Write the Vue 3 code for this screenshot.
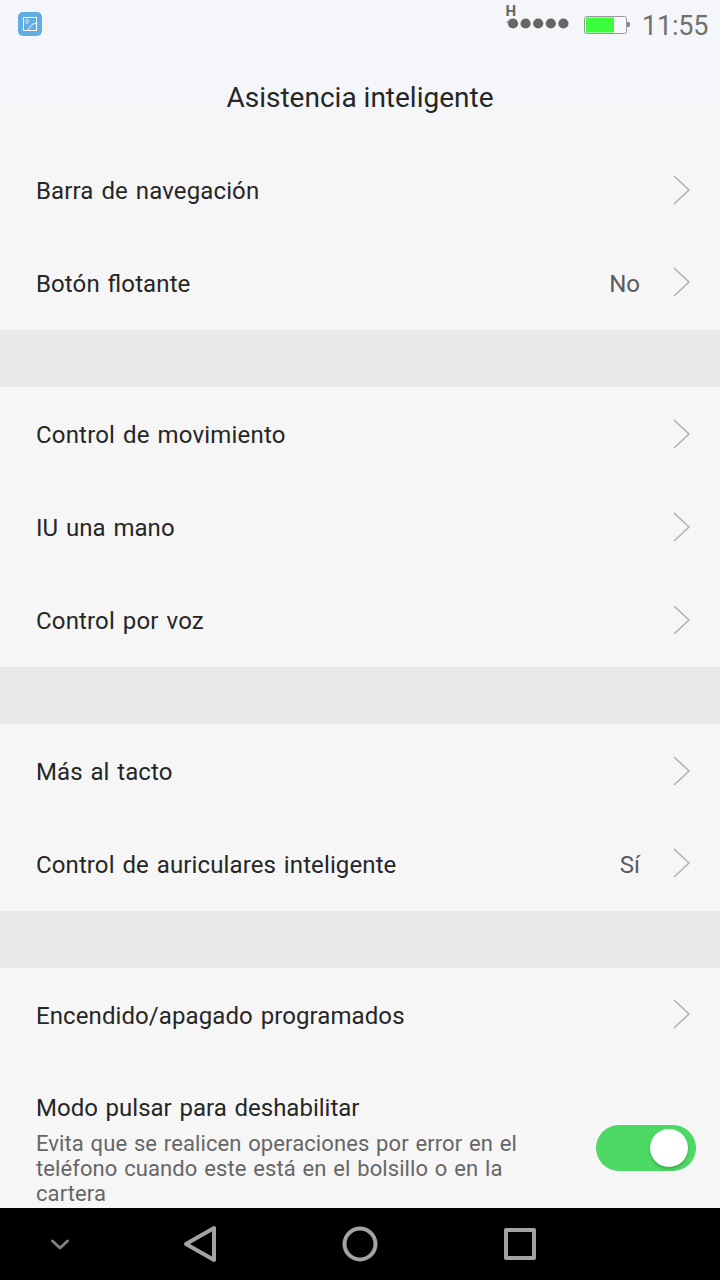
<script setup>
const groups = [
  [{ t: 'Barra de navegación', s: 0.13 }, { t: 'Botón flotante', v: 'No', s: 0.11, up: true }],
  [{ t: 'Control de movimiento', s: 0.18 }, { t: 'IU una mano', s: 0.04 }, { t: 'Control por voz', s: 0.16 }],
  [{ t: 'Más al tacto', s: 0.07 }, { t: 'Control de auriculares inteligente', v: 'Sí', s: 0.11, up: true }],
  [{ t: 'Encendido/apagado programados', s: 0.09, up: true }],
]
</script>

<template>
  <div class="screen">
    <header class="top">
      <div class="status">
        <svg class="app" width="24" height="24" viewBox="0 0 24 24">
          <rect width="24" height="24" rx="5" fill="#62aee2" />
          <g fill="none" stroke="#fff" stroke-width="1">
            <rect x="5.5" y="5.5" width="13" height="13" />
            <ellipse cx="9" cy="9.4" rx="1.4" ry="1.9" stroke-opacity=".8" />
            <path d="M18 11.5c-4 .2-5 1.500-5.700 3.500-.500 1-1.800 1-2.300 3" />
          </g>
        </svg>
        <svg class="indicators" width="130" height="48" viewBox="0 0 130 48">
          <g fill="#666">
            <circle v-for="i in 5" :key="i" :cx="0.4 + i * 12.6" cy="23.5" r="5.1" />
            <path d="M6 22l4-3v4H6z" opacity=".4" />
          </g>
          <text x="5.500" y="16" class="net">H</text>
          <rect x="84.500" y="16.500" width="42" height="17" rx="2" fill="#f8f9fb" stroke="#999" />
          <rect x="86" y="17.500" width="28" height="15" fill="#3cff3c" />
          <path d="M127 22h2l1 1v3l-1 1h-2z" fill="#888" />
        </svg>
        <span class="time">11:55</span>
      </div>
      <h1>Asistencia inteligente</h1>
    </header>
    <main>
      <section v-for="(g, i) in groups" :key="i">
        <div v-for="r in g" :key="r.t" class="row">
          <span class="label" :style="{ letterSpacing: r.s + 'px' }">{{ r.t }}</span>
          <span class="value">{{ r.v }}</span>
          <svg class="chev" :class="{ up: r.up }" width="18" height="30" viewBox="0 0 18 30"><path d="M1 1l15 14L1 29" /></svg>
        </div>
        <div v-if="i === 3" class="mode">
          <div>
            <div class="label">Modo pulsar para deshabilitar</div>
            <p>Evita que se realicen operaciones por error en el<br />teléfono cuando este está en el bolsillo o en la<br />cartera</p>
          </div>
          <div class="switch"><i></i></div>
        </div>
      </section>
    </main>
    <nav>
      <svg width="720" height="72" viewBox="0 0 720 72" fill="none" stroke="#a3a3a3" stroke-width="4" stroke-linejoin="round">
        <path d="M52.500 33l7.500 7 7.500-7" stroke="#808080" stroke-width="3" stroke-linecap="round" />
        <path d="M214 20v32l-28-16z" />
        <circle cx="360" cy="36" r="15.500" />
        <rect x="506" y="22" width="28" height="28" />
      </svg>
    </nav>
  </div>
</template>

<style>
body { margin: 0; }
</style>
<style scoped>
.screen { width: 720px; height: 1280px; overflow: hidden; display: flex; flex-direction: column; background: #e9e9e9; font-family: Roboto, "Noto Sans", sans-serif; color: #262626; }
.top { height: 144px; flex: none; background: linear-gradient(#f4f6f9 70%, #f6f6f6); }
.status { height: 48px; display: flex; align-items: center; padding: 0 12px 0 18px; }
.indicators { margin-left: auto; margin-right: 12px; }
.net { font: bold 15px Roboto, sans-serif; fill: #666; }
.time { width: 66px; font-size: 27px; line-height: 50px; padding-top: 3px; letter-spacing: -0.2px; color: #707070; }
h1 { margin: 0; height: 96px; line-height: 100px; text-align: center; font-size: 28px; font-weight: 400; }
main { flex: 1; min-height: 0; overflow: hidden; display: flex; flex-direction: column; gap: 57px; }
section { background: #f6f6f6; flex: none; }
section + section { padding-top: 1px; }
.row { height: 93px; display: flex; align-items: center; padding: 0 29px 0 36px; }
.label { font-size: 24px; line-height: 28px; word-spacing: 1.8px; font-feature-settings: "liga" 1; }
.value { margin-left: auto; margin-right: 33px; font-size: 24px; color: #5c5c5c; }
.chev { margin-bottom: 2px; fill: none; stroke: #b0b0b0; stroke-width: 1.5; }
.chev.up { margin-bottom: 4px; }
.mode { display: flex; justify-content: space-between; padding: 32px 24px 20px 36px; }
p { margin: 9px 0 0; font-size: 22px; line-height: 25px; word-spacing: 1.2px; letter-spacing: 0.09px; color: #666; }
.switch { width: 100px; height: 46px; margin-top: 31px; border-radius: 23px; background: #4cd964; display: flex; justify-content: flex-end; align-items: center; padding-right: 8px; box-sizing: border-box; }
.switch i { width: 38px; height: 38px; border-radius: 50%; background: #fff; box-shadow: 0 2px 3px rgba(0, 0, 0, .22); }
nav { height: 72px; flex: none; background: #000; }
nav svg { display: block; }
</style>
